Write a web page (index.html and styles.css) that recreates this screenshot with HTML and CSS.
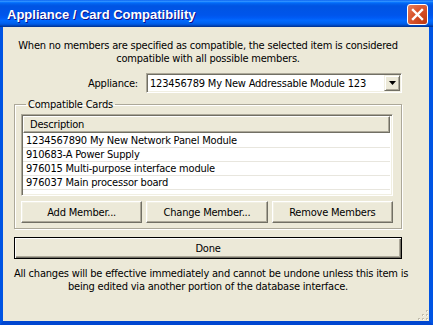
FILE: index.html
```html
<!DOCTYPE html>
<html lang="en">
<head>
    <meta charset="UTF-8">
    <title>Appliance / Card Compatibility</title>
    <link rel="stylesheet" href="styles.css">
</head>
<body>
    <div class="window">
        <div class="titlebar">
            <span class="title">Appliance / Card Compatibility</span>
            <button class="close-btn" type="button">
                <svg width="13" height="13" viewBox="0 0 13 13">
                    <path d="M2 2 L11 11 M11 2 L2 11" stroke="#fff" stroke-width="2.4" stroke-linecap="square"/>
                </svg>
            </button>
        </div>
        <div class="client">
            <p class="note">When no members are specified as compatible, the selected item is considered<br>compatible with all possible members.</p>

            <div class="appliance-row">
                <label for="appliance">Appliance:</label>
                <div class="combo" id="appliance">
                    <span class="combo-text">123456789 My New Addressable Module 123</span>
                    <span class="combo-btn">
                        <svg width="7" height="4" viewBox="0 0 7 4"><path d="M0 0 H7 L3.5 4 Z" fill="#000"/></svg>
                    </span>
                </div>
            </div>

            <fieldset class="group">
                <legend>Compatible Cards</legend>
                <div class="listview">
                    <div class="list-header">Description</div>
                    <div class="list-row">1234567890 My New Network Panel Module</div>
                    <div class="list-row">910683-A Power Supply</div>
                    <div class="list-row">976015 Multi-purpose interface module</div>
                    <div class="list-row">976037 Main processor board</div>
                </div>
                <div class="member-buttons">
                    <button class="btn" type="button">Add Member...</button>
                    <button class="btn" type="button">Change Member...</button>
                    <button class="btn" type="button">Remove Members</button>
                </div>
            </fieldset>

            <button class="btn done-btn" type="button">Done</button>

            <p class="note note-bottom">All changes will be effective immediately and cannot be undone unless this item is<br>being edited via another portion of the database interface.</p>

            <svg class="grip" width="12" height="12" viewBox="0 0 12 12">
                <g fill="#c3bfae">
                    <rect x="9" y="1" width="2" height="2"/>
                    <rect x="5" y="5" width="2" height="2"/><rect x="9" y="5" width="2" height="2"/>
                    <rect x="1" y="9" width="2" height="2"/><rect x="5" y="9" width="2" height="2"/><rect x="9" y="9" width="2" height="2"/>
                </g>
                <g fill="#fff">
                    <rect x="10" y="2" width="1" height="1"/>
                    <rect x="6" y="6" width="1" height="1"/><rect x="10" y="6" width="1" height="1"/>
                    <rect x="2" y="10" width="1" height="1"/><rect x="6" y="10" width="1" height="1"/><rect x="10" y="10" width="1" height="1"/>
                </g>
            </svg>
        </div>
    </div>
</body>
</html>
```

FILE: styles.css
```css
body {
    margin: 0;
    font-family: 'DejaVu Sans Condensed', 'Liberation Sans', sans-serif;
    font-size: 11px;
    letter-spacing: -0.2px;
    color: #000;
    background: #fff;
}
.window {
    width: 433px;
    height: 325px;
    display: flex;
    flex-direction: column;
    box-sizing: border-box;
}
.titlebar {
    height: 27px;
    flex-shrink: 0;
    display: flex;
    align-items: center;
    justify-content: space-between;
    padding: 0 5px 0 7px;
    background: linear-gradient(to bottom, #0058ee 0%, #3593ff 4%, #288eff 6%, #127dff 8%, #036ffc 10%, #0262ee 14%, #0057e5 20%, #0054e3 24%, #0055eb 56%, #005bf5 66%, #026afe 76%, #0062ef 86%, #0052d6 92%, #0040ab 96%, #003092 100%);
}
.title {
    font-family: 'Liberation Sans', sans-serif;
    font-weight: bold;
    font-size: 13px;
    letter-spacing: 0;
    color: #fff;
    text-shadow: 1px 1px #0f1089;
    padding-top: 1px;
}
.close-btn {
    width: 21px;
    height: 21px;
    padding: 0;
    border: 1px solid #fff;
    border-radius: 3px;
    background: radial-gradient(circle at 90% 90%, #c13a12 0%, #d8522b 55%, #e6815e 100%);
    display: flex;
    align-items: center;
    justify-content: center;
    margin-top: 1px;
}
.client {
    flex: 1;
    position: relative;
    background: #ece9d8;
    border-left: 3px solid #0054e3;
    border-right: 4px solid #0054e3;
    border-bottom: 4px solid #0046d0;
    padding: 12px 0 0 11px;
}
.note {
    width: 388px;
    margin: 0;
    line-height: 13px;
    text-align: center;
    white-space: nowrap;
}
.appliance-row {
    width: 388px;
    margin-top: 8px;
    display: flex;
    align-items: center;
    justify-content: flex-end;
    gap: 8px;
}
.combo {
    width: 256px;
    height: 20px;
    box-sizing: border-box;
    display: flex;
    align-items: center;
    justify-content: space-between;
    background: #fff;
    border: 1px solid;
    border-color: #aca899 #fff #fff #aca899;
    box-shadow: inset 1px 1px #716f64, inset -1px -1px #f1efe2;
    padding: 1px 1px 1px 3px;
}
.combo-btn {
    width: 16px;
    height: 16px;
    box-sizing: border-box;
    background: #ece9d8;
    border: 1px solid;
    border-color: #f1efe2 #716f64 #716f64 #f1efe2;
    box-shadow: inset 1px 1px #fff, inset -1px -1px #aca899;
    display: flex;
    align-items: center;
    justify-content: center;
}
.group {
    width: 388px;
    box-sizing: border-box;
    margin: 5px 0 0 0;
    padding: 3px 8px 5px 6px;
    border: 1px solid #aca899;
    box-shadow: 1px 1px #fff, inset 1px 1px #fff;
    min-width: 0;
}
.group legend {
    padding: 0 2px;
    margin-left: 5px;
    line-height: 13px;
}
.listview {
    height: 82px;
    box-sizing: border-box;
    background: #fff;
    border: 1px solid;
    border-color: #aca899 #fff #fff #aca899;
    box-shadow: inset 1px 1px #716f64, inset -1px -1px #f1efe2;
    padding: 1px 2px 0 1px;
}
.list-header {
    height: 17px;
    box-sizing: border-box;
    background: #ece9d8;
    border: 1px solid;
    border-color: #fff #716f64 #716f64 #fff;
    box-shadow: inset -1px -1px #aca899;
    padding: 1px 0 0 6px;
    line-height: 14px;
    margin-bottom: 1px;
}
.list-row {
    height: 14px;
    line-height: 13px;
    padding-left: 3px;
    border-bottom: 1px solid #e8e6de;
    box-sizing: border-box;
}
.member-buttons {
    margin-top: 5px;
    display: flex;
    gap: 4px;
}
.btn {
    font-family: inherit;
    font-size: 11px;
    letter-spacing: inherit;
    color: #000;
    height: 22px;
    padding: 0;
    background: #ece9d8;
    border: 1px solid;
    border-color: #fff #716f64 #716f64 #fff;
    box-shadow: inset -1px -1px #aca899, inset 1px 1px #f1efe2;
}
.member-buttons .btn {
    flex: 1;
}
.done-btn {
    display: block;
    width: 388px;
    margin-top: 8px;
    border: 1px solid #000;
    box-shadow: inset 1px 1px #fff, inset -1px -1px #716f64, inset -2px -2px #aca899;
}
.note-bottom {
    margin-top: 8px;
}
.grip {
    position: absolute;
    right: 0;
    bottom: 0;
}
```
